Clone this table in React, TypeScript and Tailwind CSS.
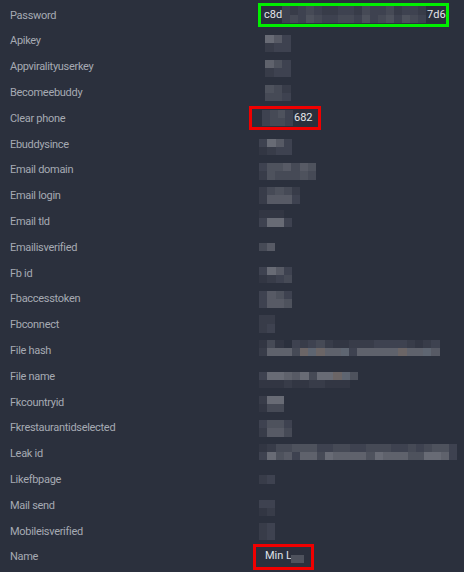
import React from "react";

const ROW_H = 25.8;
const TOP = 2;

const PAL: Record<string, string> = {
  "0": "#2b303d",
  "1": "#323643",
  "2": "#383c49",
  "3": "#3e4250",
  "4": "#464a56",
  "5": "#4e525d",
  "6": "#575a65",
  "7": "#5f626c",
  "8": "#686b75",
  "9": "#71747c",
  a: "#6b6566",
  b: "#5e6571",
};

type Blob = { x: number; y: number; cw: number; ch: number; rows: string[] };

function Cells({ blob, ox, oy }: { blob: Blob; ox: number; oy: number }) {
  const out: React.ReactElement[] = [];
  blob.rows.forEach((row, r) => {
    row.split("").forEach((c, j) => {
      out.push(
        <rect
          key={`${r}-${j}`}
          x={blob.x + j * blob.cw - ox}
          y={blob.y + r * blob.ch - oy}
          width={blob.cw + 0.4}
          height={blob.ch + 0.4}
          fill={PAL[c]}
        />
      );
    });
  });
  return <>{out}</>;
}

function RowMosaic({ blob, index }: { blob: Blob; index: number }) {
  const rowTop = TOP + ROW_H * index;
  return (
    <svg width={206} height={ROW_H} className="block" shapeRendering="crispEdges">
      <Cells blob={blob} ox={258} oy={rowTop} />
    </svg>
  );
}

function InlineMosaic({ blob }: { blob: Blob }) {
  const w = Math.max(...blob.rows.map((r) => r.length)) * blob.cw;
  const h = blob.rows.length * blob.ch;
  return (
    <svg width={w} height={h} className="block shrink-0" shapeRendering="crispEdges">
      <Cells blob={blob} ox={blob.x} oy={blob.y} />
    </svg>
  );
}

const blobs: Record<number, Blob> = {
  1: { x: 265, y: 35, cw: 8.5, ch: 8, rows: ["863", "233"] },
  2: { x: 265, y: 60, cw: 8.5, ch: 8, rows: ["753", "233"] },
  3: { x: 265, y: 85, cw: 8.5, ch: 8, rows: ["542", "443"] },
  5: { x: 259, y: 139, cw: 8.25, ch: 8, rows: ["3863", "1233"] },
  6: { x: 259, y: 163, cw: 8.1, ch: 8, rows: ["3556465", "2544454"] },
  7: { x: 259, y: 187, cw: 8.2, ch: 8, rows: ["24542", "26663"] },
  8: { x: 259, y: 210, cw: 8.25, ch: 8.5, rows: ["1110", "3883"] },
  9: { x: 259, y: 243, cw: 8, ch: 8, rows: ["46"] },
  10: { x: 259, y: 267, cw: 8.25, ch: 8, rows: ["3863", "1234"] },
  11: { x: 259, y: 291, cw: 8.25, ch: 8, rows: ["3653", "3665"] },
  12: { x: 259, y: 315, cw: 8, ch: 8.5, rows: ["22", "23"] },
  13: {
    x: 259,
    y: 340,
    cw: 8.2,
    ch: 8,
    rows: ["1410323421122233332123", "27774aba77b377777a77b6"],
  },
  14: { x: 259, y: 372, cw: 8.25, ch: 8, rows: ["388768488ab5", "111211221110"] },
  15: { x: 259, y: 396, cw: 8.3, ch: 8, rows: ["288", "144"] },
  16: { x: 259, y: 420, cw: 8.25, ch: 8, rows: ["3553", "2664"] },
  17: {
    x: 259,
    y: 444,
    cw: 8.25,
    ch: 7.5,
    rows: ["124455533443344433434553", "385637748777758777558873"],
  },
  18: { x: 259, y: 475, cw: 8, ch: 9, rows: ["23"] },
  19: { x: 259, y: 500, cw: 8, ch: 8, rows: ["33", "12"] },
  20: { x: 259, y: 523, cw: 8, ch: 8.5, rows: ["23", "23"] },
};

const passwordBlob: Blob = {
  x: 282,
  y: 6,
  cw: 8,
  ch: 8.5,
  rows: ["323432233243342332", "343543344353453543"],
};
const phoneBlob: Blob = { x: 262, y: 110, cw: 7.75, ch: 8, rows: ["3453", "3443"] };
const nameBlob: Blob = { x: 291, y: 556, cw: 6.5, ch: 8, rows: ["55"] };

const labels = [
  "Password",
  "Apikey",
  "Appviralityuserkey",
  "Becomeebuddy",
  "Clear phone",
  "Ebuddysince",
  "Email domain",
  "Email login",
  "Email tld",
  "Emailisverified",
  "Fb id",
  "Fbaccesstoken",
  "Fbconnect",
  "File hash",
  "File name",
  "Fkcountryid",
  "Fkrestaurantidselected",
  "Leak id",
  "Likefbpage",
  "Mail send",
  "Mobileisverified",
  "Name",
];

function Value({ index }: { index: number }) {
  if (index === 0) {
    return (
      <div className="flex h-[24px] w-[191px] items-center border-[3px] border-[#00f000] pl-[3px] text-[11px] text-[#e4e6ea]">
        <span className="w-[18px] shrink-0">c8d</span>
        <InlineMosaic blob={passwordBlob} />
        <span className="ml-[1px]">7d6</span>
      </div>
    );
  }
  if (index === 4) {
    return (
      <div className="ml-[-9px] flex h-[24px] w-[72px] items-center border-[3px] border-[#f00000] pl-[10px] text-[11px] text-[#e4e6ea]">
        <InlineMosaic blob={phoneBlob} />
        <span className="ml-[1px]">682</span>
      </div>
    );
  }
  if (index === 21) {
    return (
      <div className="ml-[-5px] flex h-[26px] w-[61px] items-center border-[3px] border-[#f00000] pl-[9px] text-[11px] text-[#dfe2e8]">
        <span className="w-[26px] shrink-0 whitespace-nowrap">Min L</span>
        <div className="mt-[5px]">
          <InlineMosaic blob={nameBlob} />
        </div>
      </div>
    );
  }
  const b = blobs[index];
  return b ? <RowMosaic blob={b} index={index} /> : null;
}

export default function App() {
  return (
    <div
      className="h-[572px] w-[464px] overflow-hidden bg-[#2b303d] pt-[2px]"
      style={{ fontFamily: "Roboto, 'Liberation Sans', sans-serif" }}
    >
      {labels.map((label, i) => (
        <div key={label} className="flex h-[25.8px] items-center">
          <div className="mt-[2px] w-[258px] shrink-0 whitespace-nowrap pl-[10px] text-[11px] tracking-[-0.3px] text-[#a6aab3]">
            {label}
          </div>
          <div className="flex h-full flex-1 items-center">
            <Value index={i} />
          </div>
        </div>
      ))}
    </div>
  );
}
